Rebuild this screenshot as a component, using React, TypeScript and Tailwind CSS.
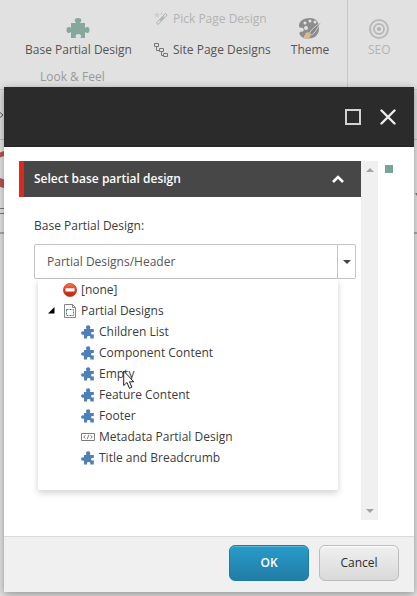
import React from "react";

function PuzzleUp() {
  return (
    <svg width="24" height="20" viewBox="0 0 24 20" fill="#84a99c" aria-hidden="true">
      <path d="M5 5h5c-1-1.500-1.300-2.300-1.300-3C8.700.8 10 0 12 0s3.300.8 3.300 2c0 .7-.3 1.500-1.300 3h5v5c.8-.6 1.500-1 2.400-1 1.300 0 2.100 1.200 2.100 3s-.8 3-2.100 3c-.9 0-1.600-.4-2.400-1v6h-4.500c.3-.8.5-1.300.5-1.900 0-1.300-1.100-2.100-2.700-2.100s-2.700.8-2.700 2.100c0 .6.200 1.100.5 1.900H5v-6c-.8.600-1.500 1-2.400 1C1.300 15 .5 13.800.5 12s.8-3 2.100-3c.9 0 1.600.4 2.400 1z" />
    </svg>
  );
}

function Puzzle() {
  return (
    <svg className="shrink-0" width="14" height="14" viewBox="0 0 14 14" fill="#4d80b6" aria-hidden="true">
      <path d="M5.500 4C5.200 3.400 5 3 5 2.200 5 1 5.900.3 7.200.3s2.100.8 2.100 1.900c0 .7-.3 1.200-.6 1.800h4.100v3.200c-.5-.2-.9-.3-1.300-.3-.9 0-1.400.5-1.400 1.300s.5 1.400 1.400 1.400c.4 0 .8-.1 1.300-.3v4.200H9.200c.2-.5.2-.8.200-1.100 0-.8-.7-1.300-1.700-1.300s-1.700.5-1.700 1.300c0 .3.100.6.300 1.100H3V9.400c-.5.300-.8.400-1.300.4C.7 9.800.1 9.100.1 8.100s.7-1.800 1.700-1.800c.4 0 .8.100 1.200.4V4z" />
    </svg>
  );
}

function Wand() {
  return (
    <svg width="14" height="14" viewBox="0 0 14 14" aria-hidden="true">
      <path d="M3 0l.8 2 2.200.3-1.700 1.200.5 2L3 4.400 1.200 5.500l.5-2L0 2.300 2.200 2z" fill="#cccccc" />
      <path d="M7.500 0l.4.900 1 .2-.8.600.2 1-.8-.5-.9.500.2-1-.7-.6 1-.2z" fill="#cccccc" />
      <path d="M11.500 1.500l1.600 1.600-9 9.400-1.700-1.600z" fill="none" stroke="#b0b0b0" />
      <path d="M9.200 4l1.600 1.600-4 4L5.200 8z" fill="#b5b5b5" />
    </svg>
  );
}

function Sitemap() {
  return (
    <svg width="14" height="14" viewBox="0 0 14 14" fill="none" stroke="#777" aria-hidden="true">
      <path d="M.5.500h4v3h-4zM5.500 5.500h4v3h-4zM9.500 10.500h4v3h-4zM2.500 4v3.500h3M7.500 9v3.500h2" />
    </svg>
  );
}

function Palette() {
  return (
    <svg width="24" height="22" viewBox="0 0 24 22" aria-hidden="true">
      <path d="M12 1C5.500 1 1 4.500 1 8.500c0 1.500.8 2.300 2 2.300 1.500 0 2.800.4 2.800 1.900 0 1.300-.8 2-2 2-1.100 0-2.300-.2-2.300 1.200C1.500 19 5 21.500 11 21.500c6 0 10-4 10-10C21 5 18 1 12 1z" fill="#8d8d8d" />
      <g fill="#e1e1e1"><circle cx="7" cy="6" r="1.500" /><circle cx="12" cy="4" r="1.500" /><circle cx="17" cy="5" r="1.500" /><circle cx="8" cy="11" r="2" /></g>
      <path d="M23.500 4.500L14 12.500l-2.500 3.500 2 2 3.500-3z" fill="#858585" stroke="#e1e1e1" strokeWidth=".8" />
      <path d="M8.500 15.500c2-.6 4.300.7 4 3-.1 1.400-1 2.700-2.500 3H5c1.500-1 1.200-4.500 3.500-6z" fill="#dbb98a" />
    </svg>
  );
}

function Target() {
  return (
    <svg width="22" height="22" viewBox="0 0 22 22" fill="none" stroke="#b9b9b9" strokeWidth="2" aria-hidden="true">
      <circle cx="11" cy="11" r="9" />
      <circle cx="11" cy="11" r="5" />
      <circle cx="11" cy="11" r="2" fill="#b0b0b0" stroke="none" />
    </svg>
  );
}

function NoEntry() {
  return (
    <svg className="shrink-0" width="14" height="14" viewBox="0 0 14 14" aria-hidden="true">
      <defs>
        <linearGradient id="stop" x1="0" y1="0" x2="0" y2="1">
          <stop offset="0" stopColor="#f47a50" />
          <stop offset=".5" stopColor="#e2371d" />
          <stop offset="1" stopColor="#b92518" />
        </linearGradient>
      </defs>
      <circle cx="7" cy="7" r="6.600" fill="url(#stop)" stroke="#c43b25" strokeWidth=".7" />
      <rect x="2.500" y="5.200" width="9" height="3.400" rx=".4" fill="#fff" />
    </svg>
  );
}

function FolderPage() {
  return (
    <svg className="shrink-0" width="14" height="14" viewBox="0 0 14 14" fill="none" aria-hidden="true">
      <path d="M1.500.500h8l3 3v10h-11z" stroke="#858585" />
      <path d="M9.500.500v3h3" stroke="#858585" />
      <path d="M3.500 5.500h7v6h-7z" stroke="#3f76b4" strokeDasharray="2 1" />
    </svg>
  );
}

function CodeBox() {
  return (
    <svg className="shrink-0" width="14" height="14" viewBox="0 0 14 14" fill="none" stroke="#7c7c7c" aria-hidden="true">
      <path d="M.5 3.500h13v7H.5z" />
      <path d="M4.500 5.300L2.700 7l1.800 1.700M9.500 5.300L11.300 7 9.500 8.700M7.800 4.800L6.200 9.200" />
    </svg>
  );
}

function Cursor() {
  return (
    <svg className="pointer-events-none absolute left-6 top-1 z-10" width="12" height="20" viewBox="0 0 12 20" aria-hidden="true">
      <path d="M.7 1v14.500l3.300-3 2.400 5.800 2.500-1.100-2.400-5.400h4.300z" fill="#fff" stroke="#222" />
    </svg>
  );
}

const designs = [
  { name: "Children List" },
  { name: "Component Content" },
  { name: "Empty", hovered: true },
  { name: "Feature Content" },
  { name: "Footer" },
  { name: "Metadata Partial Design", code: true },
  { name: "Title and Breadcrumb" },
];

function Ribbon() {
  return (
    <div className="flex h-[90px] border-b border-[#c8c8c8] text-[#555]">
      <div className="w-[347px] shrink-0">
        <div className="flex h-[67px] items-start pl-[25px]">
          <button className="flex flex-col items-center gap-[3px] pt-[18px] leading-[18px] whitespace-nowrap">
            <PuzzleUp />
            <span>Base Partial Design</span>
          </button>
          <div className="ml-[22px] flex flex-col gap-[13px] pt-[10px] leading-[18px] whitespace-nowrap">
            <button disabled className="flex items-center gap-[5px] text-[#b3b3b3]">
              <Wand />
              Pick Page Design
            </button>
            <button className="flex items-center gap-[5px]">
              <Sitemap />
              Site Page Designs
            </button>
          </div>
          <button className="ml-[20px] flex flex-col items-center gap-[2px] pt-[17px] leading-[18px]">
            <Palette />
            <span>Theme</span>
          </button>
        </div>
        <div className="pl-10 leading-[20px] text-[#999]">Look &amp; Feel</div>
      </div>
      <div className="flex-1 border-l border-[#c8c8c8] pl-5">
        <button disabled className="flex flex-col items-center gap-[1px] pt-[18px] leading-[18px] text-[#b3b3b3]">
          <Target />
          <span>SEO</span>
        </button>
      </div>
    </div>
  );
}

function PageBehind() {
  return (
    <div className="min-h-screen bg-[#e1e1e1]">
      <Ribbon />
      <div className="flex h-[50px] items-center border-b border-[#bcbcbc] bg-[#dedede]">
        <svg width="4" height="6" viewBox="0 0 4 6" fill="none" stroke="#555" aria-hidden="true">
          <path d="M0 .5L3 3 0 5.500" />
        </svg>
      </div>
      <div className="flex h-[94px] justify-between border-b-2 border-[#aaa] bg-[#e4e4e4]">
        <svg width="4" height="94" viewBox="0 0 4 94" aria-hidden="true">
          <path d="M0 12.500L4 11v5l-4 1.500zM0 38l4 1.500V48l-4-1z" fill="#b95450" />
          <path d="M0 68.500h4M0 73.500h4" stroke="#777" />
        </svg>
        <svg width="3" height="94" viewBox="0 0 3 94" fill="#777" aria-hidden="true">
          <path d="M1 53h2v3z" />
        </svg>
      </div>
    </div>
  );
}

function DesignTree() {
  return (
    <div className="absolute left-1 right-[18px] top-[35px] h-[211px] rounded-b-xs bg-white pl-[25px] shadow-[0_3px_7px_rgba(0,0,0,0.18)]">
      <button className="flex h-[21px] items-center gap-1">
        <NoEntry />
        [none]
      </button>
      <div className="-ml-[15px] flex h-[21px] items-center">
        <button aria-label="Collapse Partial Designs" className="w-[15px]">
          <svg width="7" height="7" viewBox="0 0 7 7" aria-hidden="true">
            <path d="M6.500 0v6.500H0z" fill="#000" />
          </svg>
        </button>
        <button className="flex items-center gap-1">
          <FolderPage />
          Partial Designs
        </button>
      </div>
      <ul className="pl-[18px]">
        {designs.map((d) => (
          <li key={d.name}>
            <button className="flex h-[21px] items-center gap-1 whitespace-nowrap">
              {d.code ? <CodeBox /> : <Puzzle />}
              <span className="relative">
                {d.name}
                {d.hovered && <Cursor />}
              </span>
            </button>
          </li>
        ))}
      </ul>
    </div>
  );
}

function Dialog() {
  return (
    <section role="dialog" aria-label="Select base partial design" className="flex flex-1 flex-col bg-white shadow-[0_2px_8px_rgba(0,0,0,0.35)]">
      <header className="flex h-[60px] items-center justify-end gap-[19px] border-b border-[#222] bg-[#2b2b2b] pr-[18px]">
        <button aria-label="Maximize" className="size-4 border-2 border-[#d2d2d2]" />
        <button aria-label="Close">
          <svg width="16" height="16" viewBox="0 0 16 16" fill="none" stroke="#ededed" strokeWidth="2.400" strokeLinecap="round" aria-hidden="true">
            <path d="M1.500 1.500l13 13M14.500 1.500l-13 13" />
          </svg>
        </button>
      </header>
      <div className="flex min-h-[389px] flex-1 pb-4 pl-[15px] pr-[21px] pt-[14px]">
        <div className="min-w-0 flex-1">
          <h2>
            <button aria-expanded="true" className="flex h-9 w-full items-center justify-between border-l-[5px] border-[#dc291e] bg-[#474747] pl-[10px] pr-[17px] font-semibold text-white">
              Select base partial design
              <svg width="12" height="8" viewBox="0 0 12 8" fill="none" stroke="#fff" strokeWidth="2.600" aria-hidden="true">
                <path d="M1 7l5-5 5 5" />
              </svg>
            </button>
          </h2>
          <div className="pl-[15px] pr-[5px] pt-[19px]">
            <label htmlFor="base-design" className="block h-7 leading-[20px]">
              Base Partial Design:
            </label>
            <div className="relative flex h-[35px]">
              <input
                id="base-design"
                type="text"
                defaultValue="Partial Designs/Header"
                className="min-w-0 flex-1 rounded-l-xs border border-[#c4c4c4] bg-white px-3 text-[#555] outline-none"
              />
              <button aria-label="Show designs" className="flex w-[18px] items-center justify-center rounded-r-xs border border-l-0 border-[#c4c4c4] bg-white">
                <svg width="8" height="4" viewBox="0 0 8 4" aria-hidden="true">
                  <path d="M0 0h8L4 4z" fill="#444" />
                </svg>
              </button>
              <DesignTree />
            </div>
          </div>
        </div>
        <div className="flex w-[17px] flex-col items-center justify-between bg-[#f0f0f0] py-[7px]" aria-hidden="true">
          <svg width="8" height="4" viewBox="0 0 8 4">
            <path d="M0 4h8L4 0z" fill="#a3a3a3" />
          </svg>
          <svg width="8" height="4" viewBox="0 0 8 4">
            <path d="M0 0h8L4 4z" fill="#a3a3a3" />
          </svg>
        </div>
        <div className="ml-[7px] mt-1 size-2 bg-[#75a797]" />
      </div>
      <footer className="flex h-14 items-start justify-end gap-[10px] border-t border-[#dadada] bg-[#f0f0f0] pr-[15px] pt-2">
        <button className="h-9 w-20 rounded-md border border-[#1e7ba5] bg-linear-to-b from-[#289bca] to-[#217da5] font-semibold text-white shadow-[inset_0_1px_0_#5ab5d8]">
          OK
        </button>
        <button className="h-9 w-20 rounded-md border border-[#bdbdbd] bg-linear-to-b from-[#f0f0f0] to-[#d9d9d9] text-[#2b2b2b] shadow-[inset_0_1px_0_#fff]">
          Cancel
        </button>
      </footer>
    </section>
  );
}

export default function App() {
  return (
    <div className="relative overflow-hidden font-['Open_Sans',sans-serif] text-xs text-[#3b3b3b]">
      <PageBehind />
      <div className="absolute inset-0 flex flex-col pb-1 pl-1 pr-[3px] pt-[87px]">
        <Dialog />
      </div>
    </div>
  );
}
